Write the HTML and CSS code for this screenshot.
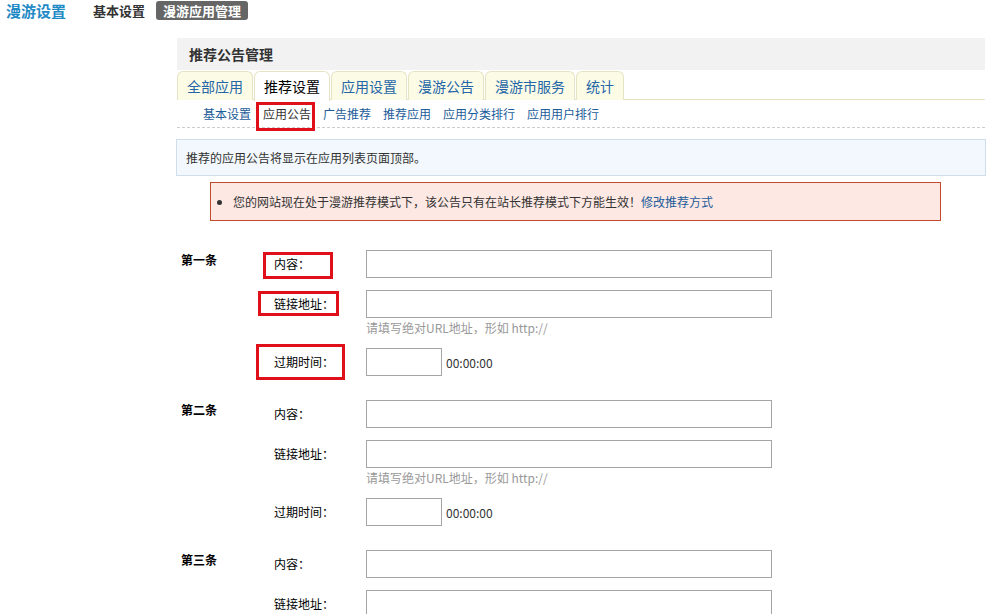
FILE: index.html
```html
<!DOCTYPE html>
<html lang="zh">
<head>
<meta charset="utf-8">
<title>漫游设置</title>
<link rel="stylesheet" href="styles.css">
</head>
<body>
<div class="topbar">
  <span class="site-title">漫游设置</span>
  <a class="top-link">基本设置</a>
  <a class="top-badge">漫游应用管理</a>
</div>
<div class="main">
  <div class="panel-head">推荐公告管理</div>
  <div class="tabs">
    <a class="tab">全部应用</a>
    <a class="tab active">推荐设置</a>
    <a class="tab">应用设置</a>
    <a class="tab">漫游公告</a>
    <a class="tab">漫游市服务</a>
    <a class="tab">统计</a>
  </div>
  <div class="subnav">
    <a class="sublink">基本设置</a>
    <a class="sublink current">应用公告<span class="mark mark-sub"></span></a>
    <a class="sublink">广告推荐</a>
    <a class="sublink">推荐应用</a>
    <a class="sublink">应用分类排行</a>
    <a class="sublink">应用用户排行</a>
  </div>
  <div class="info">推荐的应用公告将显示在应用列表页面顶部。</div>
  <div class="error">
    <ul class="error-list"><li>您的网站现在处于漫游推荐模式下，该公告只有在站长推荐模式下方能生效！<a class="elink">修改推荐方式</a></li></ul>
  </div>

  <div class="group">
    <div class="gtitle">第一条</div>
    <div class="fields">
      <div class="field f-content"><label class="lbl">内容：<span class="mark mark-c"></span></label><div class="ctl"><input class="txt" type="text"></div></div>
      <div class="field f-link"><label class="lbl">链接地址：<span class="mark mark-l"></span></label><div class="ctl"><input class="txt" type="text"><div class="hint">请填写绝对URL地址，形如 http://</div></div></div>
      <div class="field f-date"><label class="lbl">过期时间：<span class="mark mark-d"></span></label><div class="ctl row"><input class="date" type="text"><span class="time">00:00:00</span></div></div>
    </div>
  </div>

  <div class="group">
    <div class="gtitle">第二条</div>
    <div class="fields">
      <div class="field f-content"><label class="lbl">内容：</label><div class="ctl"><input class="txt" type="text"></div></div>
      <div class="field f-link"><label class="lbl">链接地址：</label><div class="ctl"><input class="txt" type="text"><div class="hint">请填写绝对URL地址，形如 http://</div></div></div>
      <div class="field f-date"><label class="lbl">过期时间：</label><div class="ctl row"><input class="date" type="text"><span class="time">00:00:00</span></div></div>
    </div>
  </div>

  <div class="group">
    <div class="gtitle">第三条</div>
    <div class="fields">
      <div class="field f-content"><label class="lbl">内容：</label><div class="ctl"><input class="txt" type="text"></div></div>
      <div class="field f-link"><label class="lbl">链接地址：</label><div class="ctl"><input class="txt" type="text"><div class="hint">请填写绝对URL地址，形如 http://</div></div></div>
      <div class="field f-date"><label class="lbl">过期时间：</label><div class="ctl row"><input class="date" type="text"><span class="time">00:00:00</span></div></div>
    </div>
  </div>
</div>
</body>
</html>
```
FILE: styles.css
```css
* { box-sizing: border-box; }
html, body { margin: 0; padding: 0; background: #fff; }
body {
  font-family: "Noto Sans CJK SC", "DejaVu Sans", sans-serif;
  font-size: 12px;
  color: #333;
  overflow: hidden;
}
a { text-decoration: none; }

.topbar {
  height: 38px;
  display: flex;
  align-items: flex-start;
  padding: 1px 0 0 6px;
}
.site-title {
  font-size: 15px;
  font-weight: bold;
  color: #1f8ac5;
  line-height: 19px;
  margin-right: 27px;
}
.top-link {
  font-size: 13px;
  font-weight: bold;
  color: #333;
  line-height: 19px;
  margin-right: 11px;
}
.top-badge {
  font-size: 13px;
  font-weight: bold;
  color: #fff;
  background: #666;
  border-radius: 3px;
  line-height: 19px;
  padding: 0 7px;
}

.main {
  margin-left: 177px;
  margin-right: 4px;
}
.panel-head {
  height: 32px;
  line-height: 32px;
  background: #f2f2f2;
  font-size: 14px;
  font-weight: bold;
  color: #333;
  padding-left: 12px;
}
.tabs {
  display: flex;
  padding-top: 1px;
  border-bottom: 1px solid #e6e3c4;
  height: 30px;
}
.tab {
  height: 29px;
  line-height: 28px;
  padding: 0 9px;
  margin-right: 1px;
  font-size: 14px;
  color: #2566a6;
  background: #fbfbe6;
  border: 1px solid #e6e3c4;
  border-bottom: none;
  border-radius: 6px 6px 0 0;
}
.tab.active {
  background: #fff;
  color: #000;
  height: 30px;
}
.subnav {
  display: flex;
  gap: 12px;
  padding-left: 26px;
  height: 28px;
  line-height: 27px;
  border-bottom: 1px dashed #ccc;
}
.sublink { color: #1c5c9a; position: relative; }
.sublink.current { color: #333; }

.mark {
  position: absolute;
  border: 3px solid #e0101a;
}
.mark-sub { left: -7px; top: 2px; width: 59px; height: 29px; }
.mark-c { left: 16px; top: 2px; width: 70px; height: 27px; }
.mark-l { left: 11px; top: 1px; width: 81px; height: 25px; }
.mark-d { left: 9px; top: -4px; width: 89px; height: 36px; }

.info {
  margin-top: 11px;
  margin-left: -1px;
  margin-right: -1px;
  background: #f2f8fd;
  border: 1px solid #cfdeec;
  line-height: 35px;
  padding-left: 9px;
  color: #333;
}
.error {
  margin: 6px 0 0 33px;
  width: 731px;
  background: #fde8e3;
  border: 1px solid #c04a2e;
  line-height: 37px;
}
.error-list {
  margin: 0;
  padding-left: 22px;
  list-style: disc;
}
.elink { color: #1c5c9a; }

.group {
  display: flex;
  margin-top: 29px;
}
.group + .group { margin-top: 24px; }
.gtitle {
  width: 70px;
  padding-left: 4px;
  padding-top: 1px;
  font-weight: bold;
  color: #000;
  line-height: 18px;
}
.fields { display: flex; flex-direction: column; }
.field { display: flex; }
.f-content { margin-bottom: 12px; }
.f-link { margin-bottom: 10px; }
.lbl {
  position: relative;
  width: 119px;
  padding-left: 27px;
  line-height: 28px;
  color: #000;
}
.ctl { display: flex; flex-direction: column; }
.ctl.row { flex-direction: row; align-items: center; }
.txt {
  width: 406px;
  height: 28px;
  border: 1px solid #a5a5a5;
  margin: 0;
  padding: 0 4px;
  font: inherit;
}
.date {
  width: 76px;
  height: 28px;
  border: 1px solid #a5a5a5;
  margin: 0;
  padding: 0 4px;
  font: inherit;
}
.time { margin-left: 4px; color: #333; }
.hint {
  color: #999;
  line-height: 20px;
}
```
